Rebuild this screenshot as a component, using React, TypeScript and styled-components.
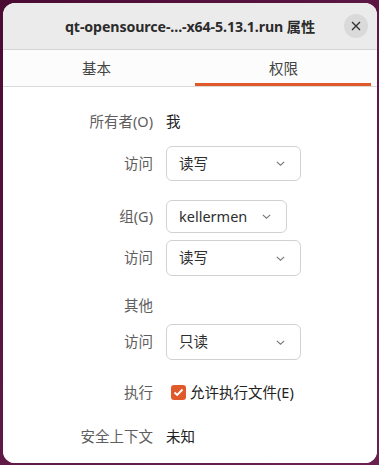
import React from "react";
import styled, { createGlobalStyle } from "styled-components";

const Global = createGlobalStyle`
  html, body { margin: 0; padding: 0; }
  body {
    width: 379px;
    height: 465px;
    overflow: hidden;
    background: linear-gradient(135deg, #4a0b33 0%, #5e1845 50%, #6b2150 100%);
    font-family: "Noto Sans", "Noto Sans CJK SC", sans-serif;
  }
`;

const Window = styled.div`
  margin: 3px 2px 2px 3px;
  width: 374px;
  height: 460px;
  border-radius: 12px;
  overflow: hidden;
  background: #ffffff;
  display: flex;
  flex-direction: column;
`;

const Header = styled.div`
  height: 46px;
  background: #ebebeb;
  border-bottom: 1px solid #d5d5d5;
  display: flex;
  align-items: center;
  justify-content: center;
  position: relative;
`;

const Title = styled.div`
  font-family: "Noto Sans", "Noto Sans CJK SC", sans-serif;
  font-weight: 700;
  font-size: 14.2px;
  color: #2b2b2b;
  letter-spacing: -0.1px;
`;

const CloseButton = styled.div`
  position: absolute;
  right: 9px;
  top: 11px;
  width: 24px;
  height: 24px;
  border-radius: 50%;
  background: #dadada;
  display: flex;
  align-items: center;
  justify-content: center;
`;

const Tabs = styled.div`
  height: 36px;
  display: flex;
  border-bottom: 1px solid #dadada;
  background: #fcfcfc;
`;

const Tab = styled.div<{ $active?: boolean }>`
  flex: 1;
  position: relative;
  display: flex;
  align-items: center;
  justify-content: center;
  padding-bottom: 2px;
  font-family: "Noto Sans CJK SC", sans-serif;
  font-size: 14.5px;
  color: #444;
  &::after {
    content: "";
    display: ${(p) => (p.$active ? "block" : "none")};
    position: absolute;
    left: 5px;
    right: 6px;
    bottom: 0;
    height: 3px;
    background: #e0592a;
  }
`;

const Content = styled.div`
  flex: 1;
  padding-top: 23px;
  display: flex;
  flex-direction: column;
  background: #ffffff;
`;

const Row = styled.div<{ $gap: number; $h: number }>`
  margin-top: ${(p) => p.$gap}px;
  height: ${(p) => p.$h}px;
  display: grid;
  grid-template-columns: 150px auto;
  column-gap: 13px;
  align-items: center;
  line-height: 1.2;
`;

const Label = styled.div`
  text-align: right;
  font-family: "Noto Sans", "Noto Sans CJK SC", sans-serif;
  font-size: 14.5px;
  color: #5e5e5e;
`;

const Value = styled.div`
  font-family: "Noto Sans", "Noto Sans CJK SC", sans-serif;
  font-size: 14.5px;
  color: #222;
`;

const Dropdown = styled.div<{ $w: number }>`
  box-sizing: border-box;
  width: ${(p) => p.$w}px;
  height: 100%;
  border: 1px solid #d2d2d2;
  border-radius: 6px;
  background: #fff;
  display: flex;
  align-items: center;
  justify-content: space-between;
  padding: 0 15px 0 12px;
  font-family: "Noto Sans", "Noto Sans CJK SC", sans-serif;
  font-size: 14.5px;
  color: #2e2e2e;
`;

const CheckWrap = styled.label`
  display: flex;
  align-items: center;
  gap: 4px;
  padding-left: 5px;
  font-family: "Noto Sans", "Noto Sans CJK SC", sans-serif;
  font-size: 14.5px;
  color: #222;
`;

const CheckBox = styled.span`
  width: 15px;
  height: 15px;
  border-radius: 3px;
  background: #e0592a;
  display: flex;
  align-items: center;
  justify-content: center;
`;

const Chevron = () => (
  <svg width="9" height="5" viewBox="0 0 9 5">
    <path d="M0.8 0.8 L4.5 4.2 L8.2 0.8" fill="none" stroke="#777" strokeWidth="1.1" />
  </svg>
);

export default function App() {
  return (
    <>
      <Global />
      <Window>
        <Header>
          <Title>qt-opensource-...-x64-5.13.1.run 属性</Title>
          <CloseButton>
            <svg width="10" height="10" viewBox="0 0 10 10">
              <path d="M1 1 L9 9 M9 1 L1 9" stroke="#333" strokeWidth="1.4" />
            </svg>
          </CloseButton>
        </Header>
        <Tabs>
          <Tab>基本</Tab>
          <Tab $active>权限</Tab>
        </Tabs>
        <Content>
          <Row $gap={0} $h={24}>
            <Label>所有者(O)</Label>
            <Value>我</Value>
          </Row>
          <Row $gap={12} $h={35}>
            <Label>访问</Label>
            <Dropdown $w={135}>
              读写
              <Chevron />
            </Dropdown>
          </Row>
          <Row $gap={19} $h={33}>
            <Label>组(G)</Label>
            <Dropdown $w={121}>
              kellermen
              <Chevron />
            </Dropdown>
          </Row>
          <Row $gap={7} $h={36}>
            <Label>访问</Label>
            <Dropdown $w={135}>
              读写
              <Chevron />
            </Dropdown>
          </Row>
          <Row $gap={18} $h={24}>
            <Label>其他</Label>
            <Value />
          </Row>
          <Row $gap={6} $h={36}>
            <Label>访问</Label>
            <Dropdown $w={135}>
              只读
              <Chevron />
            </Dropdown>
          </Row>
          <Row $gap={21} $h={24}>
            <Label>执行</Label>
            <CheckWrap>
              <CheckBox>
                <svg width="11" height="9" viewBox="0 0 11 9">
                  <path d="M1.5 4.5 L4.2 7 L9.5 1.5" fill="none" stroke="#fff" strokeWidth="1.9" />
                </svg>
              </CheckBox>
              允许执行文件(E)
            </CheckWrap>
          </Row>
          <Row $gap={20} $h={24}>
            <Label>安全上下文</Label>
            <Value>未知</Value>
          </Row>
        </Content>
      </Window>
    </>
  );
}
